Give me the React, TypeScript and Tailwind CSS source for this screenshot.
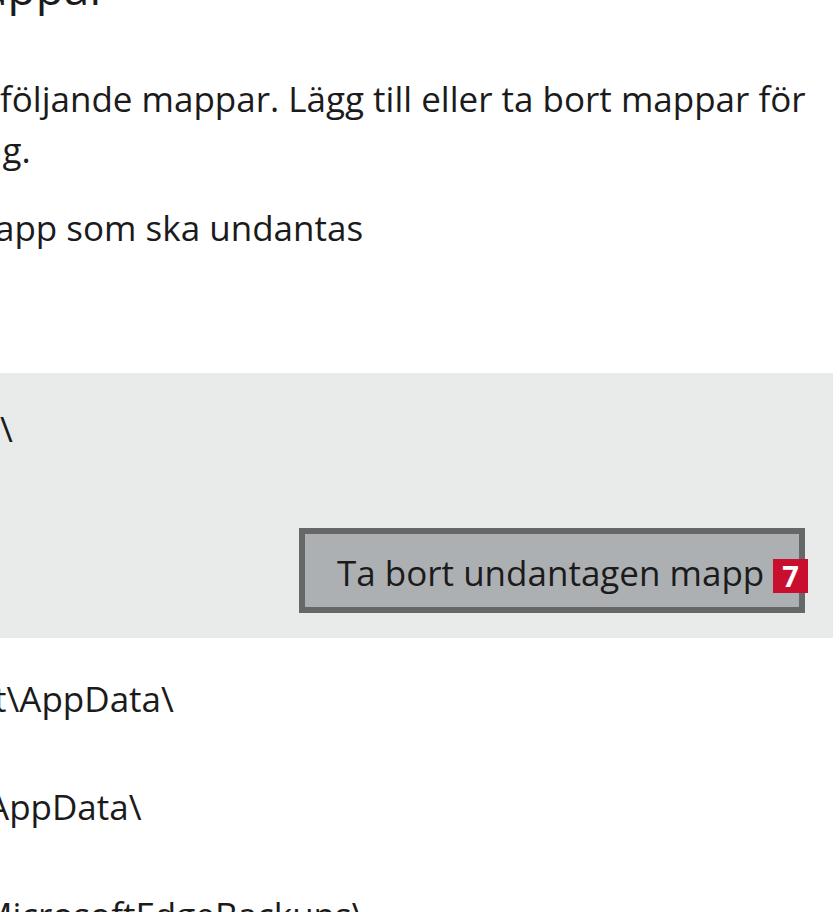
export default function App() {
  const font = { fontFamily: '"Open Sans", "Noto Sans", sans-serif' };
  return (
    <div className="w-[840px] h-[912px] bg-white overflow-hidden text-[#1b1b1b]" style={font}>
      {/* heading (cut at top) */}
      <h1 className="-mt-[36px] -ml-[18px] text-[46px] leading-[46px] font-normal whitespace-nowrap">appar</h1>

      {/* description */}
      <div className="mt-[63px] text-[35px] leading-[51px] whitespace-nowrap">
        <p>följande mappar. Lägg till eller ta bort mappar för</p>
        <p className="-ml-[19px]">ng.</p>
      </div>

      {/* add link */}
      <p className="mt-[27px] -ml-[5px] text-[35px] leading-[51px] whitespace-nowrap">app som ska undantas</p>

      {/* selected list item */}
      <div className="mt-[120px] w-[833px] h-[265px] bg-[#e9eaea] flex flex-col pt-[30px]">
        <p className="text-[35px] leading-[51px] whitespace-nowrap">\</p>
        <div className="mt-auto mb-[25px] self-end mr-[28px] relative">
          <button className="w-[506px] h-[85px] border-[6px] border-[#656769] bg-[#adb0b2] flex items-start pt-[13px] pl-[32px] text-[35px] leading-[51px] text-[#1b1b1b] whitespace-nowrap">
            Ta bort undantagen mapp
          </button>
          <span className="absolute left-[474px] top-[31px] w-[35px] h-[34px] bg-[#c8102e] text-white text-[29px] leading-[34px] font-bold flex items-center justify-center">
            7
          </span>
        </div>
      </div>

      {/* list items */}
      <div className="flex flex-col text-[35px] leading-[51px] whitespace-nowrap">
        <div className="h-[108px] pt-[35px]">
          <p className="-ml-[6px]">t\AppData\</p>
        </div>
        <div className="h-[108px] pt-[35px]">
          <p className="-ml-[13px]">AppData\</p>
        </div>
        <div className="h-[108px] pt-[35px]">
          <p className="-ml-[19px]">MicrosoftEdgeBackups\</p>
        </div>
      </div>
    </div>
  );
}
